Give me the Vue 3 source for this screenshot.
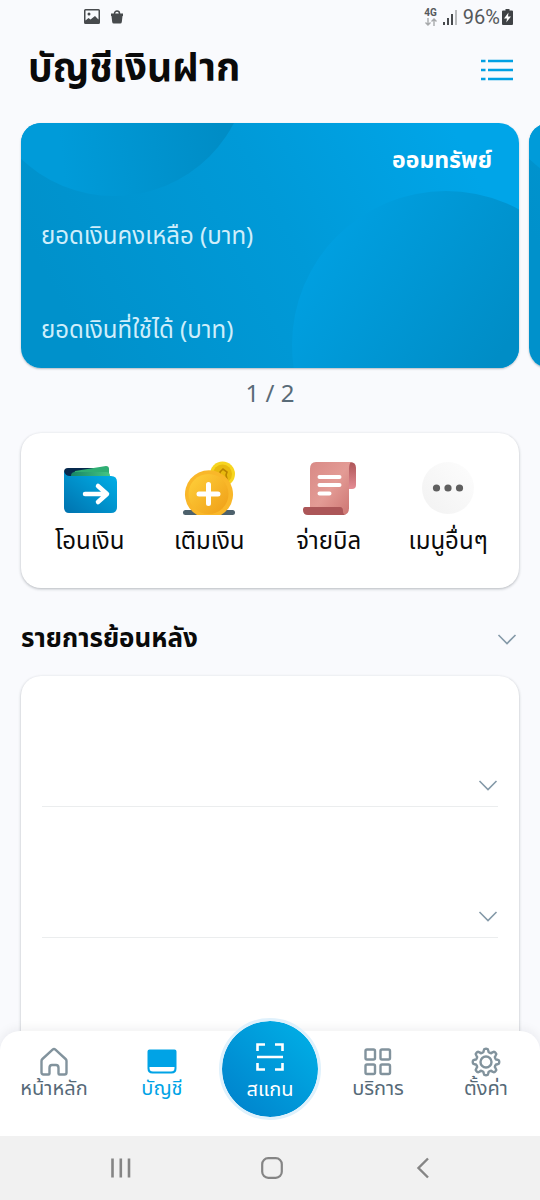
<script setup>
import { ref } from 'vue'

const accounts = ref([
  { type: 'ออมทรัพย์', balance: 'ยอดเงินคงเหลือ (บาท)', available: 'ยอดเงินที่ใช้ได้ (บาท)' },
  { type: '', balance: '', available: '' }
])
const current = ref(0)
const actions = [
  { id: 'transfer', label: 'โอนเงิน' },
  { id: 'topup', label: 'เติมเงิน' },
  { id: 'bill', label: 'จ่ายบิล' },
  { id: 'more', label: 'เมนูอื่นๆ' }
]
const rows = [1, 2, 3]
const gearTeeth = 8
const gearPath = (() => {
  const pts = []
  for (let i = 0; i <= 96; i++) {
    const a = (i / 96) * Math.PI * 2
    const wave = Math.max(-1, Math.min(1, Math.cos(a * gearTeeth) * 1.7))
    const r = 11.6 + wave * 1.6
    pts.push(`${(15 + r * Math.sin(a)).toFixed(2)} ${(15 - r * Math.cos(a)).toFixed(2)}`)
  }
  return `M${pts.join('L')}Z`
})()
</script>

<template>
  <div class="screen">
    <div class="status">
      <div class="status-left">
        <svg width="16" height="16" viewBox="0 0 16 16">
          <path fill="#474a4d" fill-rule="evenodd" d="M1.500 0h13A1.500 1.500 0 0 1 16 1.500v12a1.500 1.500 0 0 1-1.500 1.500h-13A1.500 1.500 0 0 1 0 13.500v-12A1.500 1.500 0 0 1 1.500 0ZM1.500 1.500v10l3-2.500 2 1.500L11 7l3.500 3.500v-9ZM5 3.500a1.500 1.500 0 1 1 0 3 1.500 1.500 0 0 1 0-3Z" />
        </svg>
        <svg width="12" height="14" viewBox="0 0 12 14">
          <path d="M3.500 5V3.500a2.500 2.500 0 0 1 5 0V5" fill="none" stroke="#474a4d" stroke-width="1.500" />
          <path d="M0 3.500h12V6h-.5l-.7 6q-.2 1.500-1.600 1.500H2.800Q1.400 13.500 1.200 12L.5 6H0Z" fill="#474a4d" />
        </svg>
      </div>
      <div class="status-right">
        <div class="network">
          <span>4G</span>
          <svg width="12" height="8" viewBox="0 0 12 8" fill="none" stroke="#a7a9ab" stroke-width="1.400">
            <path d="M3 0v7M.5 4.500 3 7l2.500-2.500M9 8V1M6.500 3.500 9 1l2.500 2.500" />
          </svg>
        </div>
        <svg width="14" height="15" viewBox="0 0 14 15">
          <path d="M0 12h2v3H0zM4 8h2v7H4zM8 4h2v11H8z" fill="#474a4d" />
          <path d="M12 0h2v15h-2z" fill="#b9bbbd" />
        </svg>
        <span class="percent">96%</span>
        <svg width="11" height="16" viewBox="0 0 11 16">
          <path d="M3.500 0h4v1.500H10a1 1 0 0 1 1 1V15a1 1 0 0 1-1 1H1a1 1 0 0 1-1-1V2.500a1 1 0 0 1 1-1h2.500Z" fill="#3f4245" />
          <path d="M6.500 3.500 2 9.500h3l-.7 4 4.700-6H6Z" fill="#fff" />
        </svg>
      </div>
    </div>

    <header class="header">
      <h1>บัญชีเงินฝาก</h1>
      <button class="icon-button" type="button" aria-label="เมนู">
        <svg width="32" height="22" viewBox="0 0 32 22" stroke="#00a0e3" stroke-width="2.600">
          <path d="M0 2h4.500M7 2h25M0 11h4.500M7 11h25M0 20h4.500M7 20h25" />
        </svg>
      </button>
    </header>

    <main>
      <div class="carousel">
        <article v-for="(account, index) in accounts" :key="index" class="account">
          <svg class="account-art" viewBox="0 0 498 245" preserveAspectRatio="none" aria-hidden="true">
            <defs>
              <linearGradient :id="`base${index}`" gradientUnits="userSpaceOnUse" x1="60" y1="220" x2="440" y2="20">
                <stop offset="0" stop-color="#0091cb" />
                <stop offset=".55" stop-color="#009ad8" />
                <stop offset="1" stop-color="#00a5e8" />
              </linearGradient>
              <linearGradient :id="`top${index}`" gradientUnits="userSpaceOnUse" x1="40" y1="30" x2="200" y2="10">
                <stop offset="0" stop-color="#009bd9" />
                <stop offset="1" stop-color="#008dc6" />
              </linearGradient>
              <linearGradient :id="`low${index}`" gradientUnits="userSpaceOnUse" x1="300" y1="130" x2="470" y2="245">
                <stop offset="0" stop-color="#009fe0" />
                <stop offset="1" stop-color="#008dc6" />
              </linearGradient>
            </defs>
            <rect width="498" height="245" :fill="`url(#base${index})`" />
            <circle cx="93" cy="-62" r="135" :fill="`url(#top${index})`" />
            <circle cx="425" cy="222" r="154" :fill="`url(#low${index})`" />
          </svg>
          <p class="account-type">{{ account.type }}</p>
          <p class="account-line">{{ account.balance }}</p>
          <p class="account-line">{{ account.available }}</p>
        </article>
      </div>
      <p class="pager">{{ current + 1 }} / {{ accounts.length }}</p>

      <section class="actions">
        <button v-for="action in actions" :key="action.id" class="action" type="button">
          <svg v-if="action.id === 'transfer'" width="54" height="54" viewBox="0 0 54 54">
            <defs>
              <linearGradient id="wallet" x1="0" y1="1" x2="1" y2="0"><stop stop-color="#0072ae" /><stop offset="1" stop-color="#00b2ea" /></linearGradient>
              <linearGradient id="note" x1="0" x2="1"><stop stop-color="#178565" /><stop offset="1" stop-color="#45c684" /></linearGradient>
            </defs>
            <path d="M1 11a4 4 0 0 1 4-4h27v14H1Z" fill="#07294d" />
            <path d="m12 10 31-5q3 0 3 3v12H8z" fill="#2fae73" />
            <path d="M8 15q0-4 4-4h31q4 0 4 4v6H8z" fill="url(#note)" />
            <path d="M1 10q1 5 6 5h41q6 0 6 6v25q0 6-6 6H6q-5 0-5-6Z" fill="url(#wallet)" />
            <path d="M22 33h21M35 25l9 8-9 8" fill="none" stroke="#fff" stroke-width="4.500" stroke-linecap="round" stroke-linejoin="round" />
          </svg>
          <svg v-else-if="action.id === 'topup'" width="54" height="54" viewBox="0 0 54 54">
            <defs>
              <linearGradient id="coin" x1="0" y1="0" x2="1" y2="1"><stop stop-color="#ffd13b" /><stop offset="1" stop-color="#ef9d16" /></linearGradient>
            </defs>
            <rect x="1" y="49" width="52" height="5" rx="2.500" fill="#4d616c" />
            <circle cx="40.500" cy="13" r="12.500" fill="#f7d51f" />
            <circle cx="40.500" cy="13" r="9.500" fill="#e8b90e" />
            <path d="M38 16v-5l3-3 4 3-1 3 1 4-5-1" fill="none" stroke="#b98300" stroke-width="1.600" />
            <path d="M15 54a24 24 0 1 1 24 0Z" fill="#f9b729" />
            <circle cx="26.500" cy="33" r="20" fill="url(#coin)" />
            <path d="M26.500 23.500v19M17 33h19" stroke="#fff" stroke-width="5" stroke-linecap="round" />
          </svg>
          <svg v-else-if="action.id === 'bill'" width="54" height="54" viewBox="0 0 54 54">
            <defs>
              <linearGradient id="paper" x1="0" y1="0" x2="1" y2="1"><stop stop-color="#d98a86" /><stop offset=".5" stop-color="#e39b95" /><stop offset="1" stop-color="#cc7471" /></linearGradient>
              <linearGradient id="curl" x1="0" y1="0" x2="0" y2="1"><stop stop-color="#ad5557" /><stop offset="1" stop-color="#e48c94" /></linearGradient>
            </defs>
            <path d="M44 1h4q6 0 6 6v17q0 4-4 4h-4z" fill="url(#curl)" />
            <path d="M14 1h35q-2 2-2 7v39q0 7-6 7H8V8q0-7 6-7Z" fill="url(#paper)" />
            <path d="M3 46h35q3 0 3 4 0 4 3 4H6q-5 0-5-5 0-3 2-3Z" fill="#ac5658" />
            <path d="M17.500 16h20M17.500 24h20M17.500 32.500h10" stroke="#fff" stroke-width="4" stroke-linecap="round" />
          </svg>
          <svg v-else width="54" height="54" viewBox="0 0 54 54">
            <defs>
              <linearGradient id="disc" x1="1" y1="0" x2="0" y2="1"><stop stop-color="#fdfdfd" /><stop offset="1" stop-color="#f2f2f2" /></linearGradient>
            </defs>
            <circle cx="27" cy="27" r="26" fill="url(#disc)" />
            <g fill="#5f5f5f"><circle cx="15.500" cy="27" r="3.600" /><circle cx="27" cy="27" r="3.600" /><circle cx="38.500" cy="27" r="3.600" /></g>
          </svg>
          <span>{{ action.label }}</span>
        </button>
      </section>

      <section>
        <div class="section-head">
          <h2>รายการย้อนหลัง</h2>
          <button class="icon-button" type="button" aria-label="รายการย้อนหลัง">
            <svg class="chevron" width="20" height="12" viewBox="0 0 20 12"><path d="m1.500 2 8.500 8.500L18.500 2" /></svg>
          </button>
        </div>
        <ul class="history">
          <li v-for="row in rows" :key="row">
            <button class="icon-button" type="button" aria-label="รายละเอียด">
              <svg class="chevron" width="20" height="12" viewBox="0 0 20 12"><path d="m1.500 2 8.500 8.500L18.500 2" /></svg>
            </button>
          </li>
        </ul>
      </section>
    </main>

    <footer class="dock">
      <nav class="tabs">
        <a class="tab" href="#home">
          <svg class="tab-icon" width="30" height="30" viewBox="0 0 30 30">
            <path d="M2.500 14Q2.500 12.800 3.400 12L13.600 2.600Q15 1.400 16.400 2.600L26.600 12q.9.8.9 2v11.500q0 2-2 2h-5q-1 0-1-1V21q0-3-2.500-3h-4q-2.500 0-2.500 3v5.500q0 1-1 1h-5q-2 0-2-2Z" />
          </svg>
          <span>หน้าหลัก</span>
        </a>
        <a class="tab active" href="#accounts" aria-current="page">
          <svg width="30" height="30" viewBox="0 0 30 30">
            <path fill="#00a3e6" fill-rule="evenodd" d="M2.500 2.500h25Q29.500 2.500 29.500 4.500v17q0 5-5 5h-19Q.5 26.500 .5 21.500V4.500Q.5 2.500 2.500 2.500ZM2.500 20v1Q2.500 24.500 6 24.500h18q3.500 0 3.500-3.500V20Z" />
          </svg>
          <span>บัญชี</span>
        </a>
        <div class="scan-slot">
          <button class="scan" type="button">
            <svg width="28" height="28" viewBox="0 0 28 28" fill="none" stroke="#fff" stroke-width="2.600">
              <path d="M1.500 8V1.500H9M19 1.500h7.500V8M26.500 20v6.500H19M9 26.500H1.500V20M1 14h26" />
            </svg>
            <span>สแกน</span>
          </button>
        </div>
        <a class="tab" href="#services">
          <svg class="tab-icon" width="30" height="30" viewBox="0 0 30 30">
            <rect x="2.500" y="2.500" width="9.500" height="10" rx="1.500" /><rect x="17.500" y="2.500" width="9.500" height="10" rx="1.500" />
            <rect x="2.500" y="17.500" width="9.500" height="9.500" rx="1.500" /><rect x="17.500" y="17.500" width="9.500" height="9.500" rx="1.500" />
          </svg>
          <span>บริการ</span>
        </a>
        <a class="tab" href="#settings">
          <svg class="tab-icon" width="30" height="30" viewBox="0 0 30 30">
            <path :d="gearPath" />
            <circle cx="15" cy="15" r="5.500" />
          </svg>
          <span>ตั้งค่า</span>
        </a>
      </nav>
      <div class="system">
        <button class="icon-button" type="button" aria-label="Recents">
          <svg width="22" height="22" viewBox="0 0 22 22" stroke="#858585" stroke-width="2.600"><path d="M2.500 1.500v19M10.800 1.500v19M19 1.500v19" /></svg>
        </button>
        <button class="icon-button" type="button" aria-label="Home">
          <svg width="22" height="22" viewBox="0 0 22 22" fill="none" stroke="#858585" stroke-width="2.200"><rect x="1.200" y="1.200" width="19.600" height="19.600" rx="6" /></svg>
        </button>
        <button class="icon-button" type="button" aria-label="Back">
          <svg width="22" height="22" viewBox="0 0 22 22" fill="none" stroke="#858585" stroke-width="2.400"><path d="m16 1.500-9.500 9.500 9.500 9.500" /></svg>
        </button>
      </div>
    </footer>
  </div>
</template>

<style>
body {
  margin: 0;
  background: #f9fafd;
}
</style>

<style scoped>
.screen {
  height: 100vh;
  overflow: hidden;
  position: relative;
  background: #f9fafd;
  color: #0a0a0a;
  font-family: "Noto Sans Thai", "Noto Sans", sans-serif;
}
h1, h2, p, ul {
  margin: 0;
  padding: 0;
}
button {
  font: inherit;
  color: inherit;
  background: none;
  border: 0;
  padding: 0;
  cursor: pointer;
}
svg {
  display: block;
  flex: none;
}
.icon-button {
  display: flex;
  align-items: center;
  justify-content: center;
}
.status {
  height: 34px;
  display: flex;
  justify-content: space-between;
  align-items: center;
  padding: 0 27px 0 84px;
  font-family: Roboto, sans-serif;
  color: #55585b;
}
.status-left {
  display: flex;
  align-items: center;
  gap: 11px;
}
.status-right {
  display: flex;
  align-items: center;
  gap: 6px;
}
.network {
  display: flex;
  flex-direction: column;
  align-items: center;
  font-size: 10px;
  line-height: 10px;
  font-weight: 700;
}
.percent {
  font-size: 20px;
  line-height: 24px;
  margin-right: -4px;
}
.header {
  height: 72px;
  display: flex;
  align-items: center;
  justify-content: space-between;
  padding: 0 27px 0 28px;
}
h1 {
  font-size: 39px;
  line-height: 56px;
  font-weight: 700;
}
.carousel {
  display: flex;
  gap: 10px;
  padding: 17px 21px 4px;
  overflow: hidden;
}
.account {
  flex: 0 0 100%;
  box-sizing: border-box;
  min-height: 245px;
  position: relative;
  padding: 20px 27px 19px 20px;
  border-radius: 20px;
  overflow: hidden;
  color: #cfeefb;
  display: flex;
  flex-direction: column;
  box-shadow: 0 1px 2px rgba(20, 40, 60, 0.3);
}
.account-art {
  position: absolute;
  inset: 0;
  width: 100%;
  height: 100%;
}
.account-type,
.account-line {
  position: relative;
  font-size: 24px;
  line-height: 36px;
}
.account-type {
  min-height: 36px;
  text-align: right;
  font-size: 23px;
  font-weight: 700;
  color: #fff;
}
.account-line {
  margin-top: 40px;
}
.account-line + .account-line {
  margin-top: 58px;
}
.pager {
  text-align: center;
  font-size: 24px;
  line-height: 46px;
  color: #596b78;
}
.actions {
  display: grid;
  grid-template-columns: repeat(4, 1fr);
  margin: 15px 21px 0;
  padding: 28px 11px 28px 9px;
  border-radius: 20px;
  background: #fff;
  box-shadow: 0 1px 3px rgba(20, 30, 40, 0.3);
}
.action {
  display: flex;
  flex-direction: column;
  align-items: center;
  gap: 9px;
  font-size: 24px;
  line-height: 36px;
  white-space: nowrap;
}
.section-head {
  display: flex;
  align-items: center;
  justify-content: space-between;
  padding: 33px 23px 19px 21px;
}
h2 {
  font-size: 26px;
  line-height: 36px;
  font-weight: 700;
}
.chevron {
  fill: none;
  stroke: #8499a8;
  stroke-width: 1.6;
}
.history {
  list-style: none;
  margin: 0 21px;
  padding: 0 21px;
  border-radius: 20px;
  background: #fff;
  box-shadow: 0 1px 3px rgba(20, 30, 40, 0.3);
}
.history li {
  height: 130px;
  display: flex;
  justify-content: flex-end;
  align-items: flex-end;
  border-bottom: 1px solid #ebedee;
}
.history .icon-button {
  padding-bottom: 15px;
}
.history li:last-child {
  height: 240px;
}
.dock {
  position: absolute;
  left: 0;
  right: 0;
  bottom: 0;
}
.tabs {
  display: grid;
  grid-template-columns: repeat(5, 1fr);
  height: 105px;
  background: #fff;
  border-radius: 20px 20px 0 0;
  box-shadow: 0 -1px 12px rgba(20, 30, 40, 0.08);
}
.tab {
  display: flex;
  flex-direction: column;
  align-items: center;
  padding-top: 16px;
  font-size: 20px;
  line-height: 24px;
  color: #566a78;
  text-decoration: none;
  white-space: nowrap;
}
.tab.active {
  color: #00a3e6;
}
.tab-icon {
  fill: none;
  stroke: #82939d;
  stroke-width: 2.4;
}
.scan-slot {
  display: flex;
  justify-content: center;
}
.scan {
  flex: none;
  width: 102px;
  height: 102px;
  box-sizing: border-box;
  margin-top: -13px;
  padding-top: 8px;
  border: 3px solid #dff1fc;
  border-radius: 50%;
  background: linear-gradient(45deg, #007fca, #00b2e8) padding-box;
  color: #fff;
  display: flex;
  flex-direction: column;
  align-items: center;
  justify-content: center;
  gap: 6px;
  font-size: 20px;
  line-height: 26px;
}
.system {
  height: 64px;
  background: #f1f1f1;
  display: flex;
  align-items: center;
  justify-content: space-between;
  padding: 0 106px 0 110px;
}
</style>
